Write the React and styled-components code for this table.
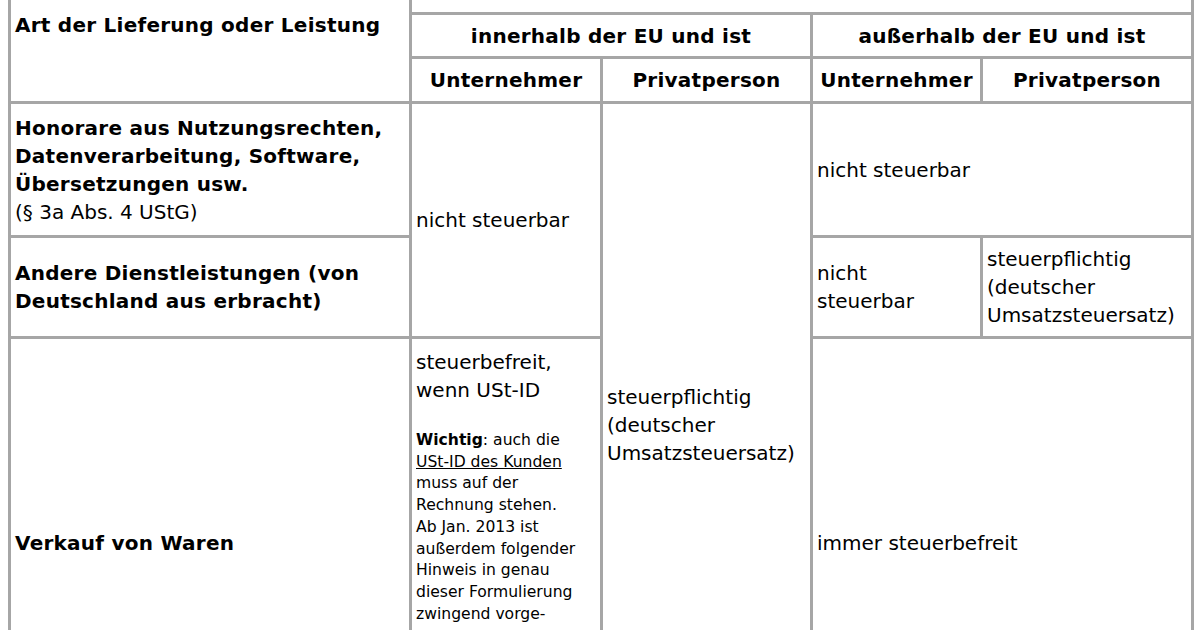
import React from 'react';
import styled, { createGlobalStyle } from 'styled-components';

const GlobalStyle = createGlobalStyle`
    html, body {
        margin: 0;
        padding: 0;
        background: #fff;
        overflow: hidden;
    }
`;

const Page = styled.div`
    width: 1200px;
    height: 630px;
    overflow: hidden;
    padding-left: 8px;
    box-sizing: border-box;
`;

const Table = styled.table`
    border-collapse: collapse;
    table-layout: fixed;
    width: 1186px;
    margin-top: -54px;
    font-family: "DejaVu Sans", Verdana, sans-serif;
    font-size: 20px;
    line-height: 28px;
    color: #000;

    b {
        font-weight: 700;
        letter-spacing: 0.25px;
    }
`;

const Row = styled.tr`
    height: ${(p) => p.$h}px;
`;

const Cell = styled.td`
    border: 3px solid #a6a6a6;
    padding: 0 4px;
    vertical-align: ${(p) => (p.$top ? 'top' : 'middle')};
    text-align: ${(p) => (p.$center ? 'center' : 'left')};
    font-weight: ${(p) => (p.$bold ? 700 : 400)};
    letter-spacing: ${(p) => (p.$bold ? '0.25px' : 'normal')};
`;

const Note = styled.div`
    margin-top: 26px;
    font-size: 15.6px;
    line-height: 21.7px;

    b {
        letter-spacing: normal;
    }

    u {
        text-decoration: underline;
    }
`;

const TopText = styled.div`
    padding-top: 9px;
`;

function App() {
    return (
        <Page>
            <GlobalStyle />
            <Table>
                <colgroup>
                    <col style={{ width: 401 }} />
                    <col style={{ width: 191 }} />
                    <col style={{ width: 210 }} />
                    <col style={{ width: 170 }} />
                    <col style={{ width: 211 }} />
                </colgroup>
                <tbody>
                    <Row $h={66}>
                        <Cell $bold rowSpan={3}>Art der Lieferung oder Leistung</Cell>
                        <Cell colSpan={4} />
                    </Row>
                    <Row $h={44}>
                        <Cell $bold $center colSpan={2}>innerhalb der EU und ist</Cell>
                        <Cell $bold $center colSpan={2}>außerhalb der EU und ist</Cell>
                    </Row>
                    <Row $h={45}>
                        <Cell $bold $center>Unternehmer</Cell>
                        <Cell $bold $center>Privatperson</Cell>
                        <Cell $bold $center>Unternehmer</Cell>
                        <Cell $bold $center>Privatperson</Cell>
                    </Row>
                    <Row $h={134}>
                        <Cell>
                            <b>Honorare aus Nutzungsrechten,<br />Datenverarbeitung, Software,<br />Übersetzungen usw.</b>
                            <br />(§ 3a Abs. 4 UStG)
                        </Cell>
                        <Cell rowSpan={2}>nicht steuerbar</Cell>
                        <Cell rowSpan={3}>steuerpflichtig<br />(deutscher<br />Umsatzsteuersatz)</Cell>
                        <Cell colSpan={2}>nicht steuerbar</Cell>
                    </Row>
                    <Row $h={101}>
                        <Cell $bold>Andere Dienstleistungen (von<br />Deutschland aus erbracht)</Cell>
                        <Cell>nicht<br />steuerbar</Cell>
                        <Cell>steuerpflichtig<br />(deutscher<br />Umsatzsteuersatz)</Cell>
                    </Row>
                    <Row $h={410}>
                        <Cell $bold>Verkauf von Waren</Cell>
                        <Cell $top>
                            <TopText>steuerbefreit,<br />wenn USt-ID</TopText>
                            <Note>
                                <b>Wichtig</b>: auch die<br />
                                <u>USt-ID des Kunden</u><br />
                                muss auf der<br />
                                Rechnung stehen.<br />
                                Ab Jan. 2013 ist<br />
                                außerdem folgender<br />
                                Hinweis in genau<br />
                                dieser Formulierung<br />
                                zwingend vorge-
                            </Note>
                        </Cell>
                        <Cell colSpan={2}>immer steuerbefreit</Cell>
                    </Row>
                </tbody>
            </Table>
        </Page>
    );
}

export default App;
